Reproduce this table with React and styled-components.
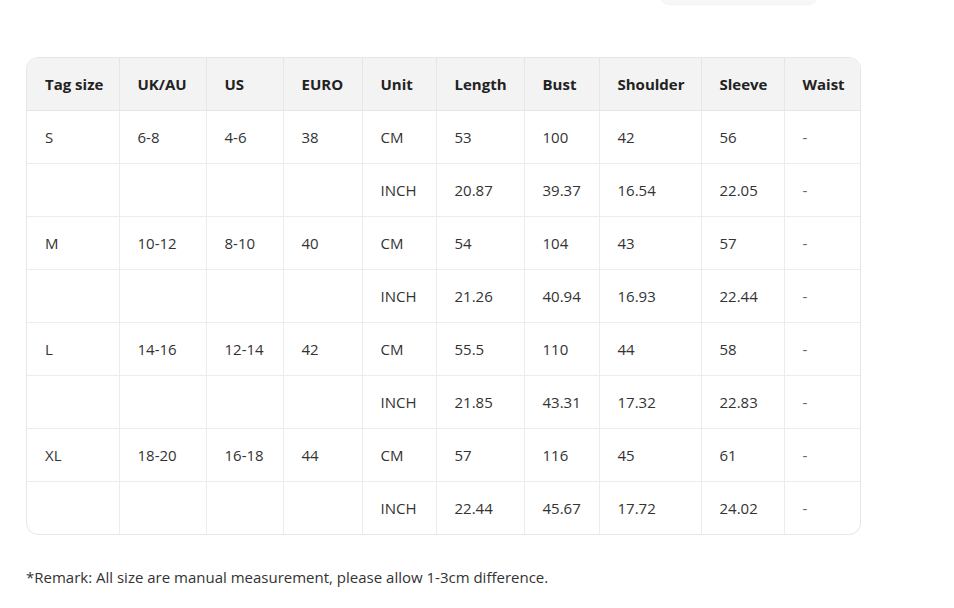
import React from 'react';
import styled, { createGlobalStyle } from 'styled-components';

const GlobalStyle = createGlobalStyle`
  html, body {
    margin: 0;
    padding: 0;
    background: #ffffff;
  }
  body {
    font-family: "Open Sans", "Noto Sans", Arial, sans-serif;
    color: #333333;
  }
`;

const columns = [
  { label: 'Tag size', width: 92 },
  { label: 'UK/AU', width: 87 },
  { label: 'US', width: 77 },
  { label: 'EURO', width: 79 },
  { label: 'Unit', width: 74 },
  { label: 'Length', width: 88 },
  { label: 'Bust', width: 75 },
  { label: 'Shoulder', width: 102 },
  { label: 'Sleeve', width: 83 },
  { label: 'Waist', width: 76 },
];

const sizes = [
  { tag: 'S', uk: '6-8', us: '4-6', euro: '38', cm: ['53', '100', '42', '56'], inch: ['20.87', '39.37', '16.54', '22.05'] },
  { tag: 'M', uk: '10-12', us: '8-10', euro: '40', cm: ['54', '104', '43', '57'], inch: ['21.26', '40.94', '16.93', '22.44'] },
  { tag: 'L', uk: '14-16', us: '12-14', euro: '42', cm: ['55.5', '110', '44', '58'], inch: ['21.85', '43.31', '17.32', '22.83'] },
  { tag: 'XL', uk: '18-20', us: '16-18', euro: '44', cm: ['57', '116', '45', '61'], inch: ['22.44', '45.67', '17.72', '24.02'] },
];

const SizeChart = () => {
  const rows = [];
  sizes.forEach((s) => {
    rows.push([s.tag, s.uk, s.us, s.euro, 'CM', ...s.cm, '-']);
    rows.push(['', '', '', '', 'INCH', ...s.inch, '-']);
  });
  return (
    <Page>
      <GlobalStyle />
      <TopBar>
        <Pill />
      </TopBar>
      <TableWrap>
        <Table>
          <colgroup>
            {columns.map((c) => (
              <col key={c.label} style={{ width: c.width }} />
            ))}
          </colgroup>
          <thead>
            <tr>
              {columns.map((c) => (
                <Th key={c.label}>{c.label}</Th>
              ))}
            </tr>
          </thead>
          <tbody>
            {rows.map((r, i) => (
              <tr key={i}>
                {r.map((v, j) => (
                  <Td key={j} $dash={v === '-'}>{v}</Td>
                ))}
              </tr>
            ))}
          </tbody>
        </Table>
      </TableWrap>
      <Remark>*Remark: All size are manual measurement, please allow 1-3cm difference.</Remark>
    </Page>
  );
};

const Page = styled.div`
  width: 954px;
  height: 608px;
  overflow: hidden;
  padding: 0 0 0 26px;
  box-sizing: border-box;
`;

const TopBar = styled.div`
  display: flex;
  height: 57px;
  padding-left: 634px;
`;

const Pill = styled.div`
  width: 158px;
  height: 24px;
  margin-top: -20px;
  border-radius: 10px;
  background: #f7f7f7;
  box-shadow: 0 1px 2px rgba(0, 0, 0, 0.06);
`;

const TableWrap = styled.div`
  width: 835px;
  border: 1px solid #e6e6e6;
  border-radius: 12px;
  overflow: hidden;
  box-sizing: border-box;
`;

const Table = styled.table`
  width: 100%;
  border-collapse: collapse;
  table-layout: fixed;
  font-size: 15px;
`;

const Th = styled.th`
  height: 52px;
  padding: 0 0 0 18px;
  text-align: left;
  font-weight: 700;
  color: #222222;
  background: #f3f3f3;
  border-left: 1px solid #e6e6e6;
  border-bottom: 1px solid #e6e6e6;
  &:first-child { border-left: none; }
`;

const Td = styled.td`
  height: 52px;
  padding: 0 0 0 18px;
  text-align: left;
  color: ${({ $dash }) => ($dash ? '#666666' : '#333333')};
  border-left: 1px solid #ececec;
  border-top: 1px solid #ececec;
  &:first-child { border-left: none; }
`;

const Remark = styled.p`
  margin: 32px 0 0;
  font-size: 15px;
  color: #333333;
`;

export default SizeChart;
